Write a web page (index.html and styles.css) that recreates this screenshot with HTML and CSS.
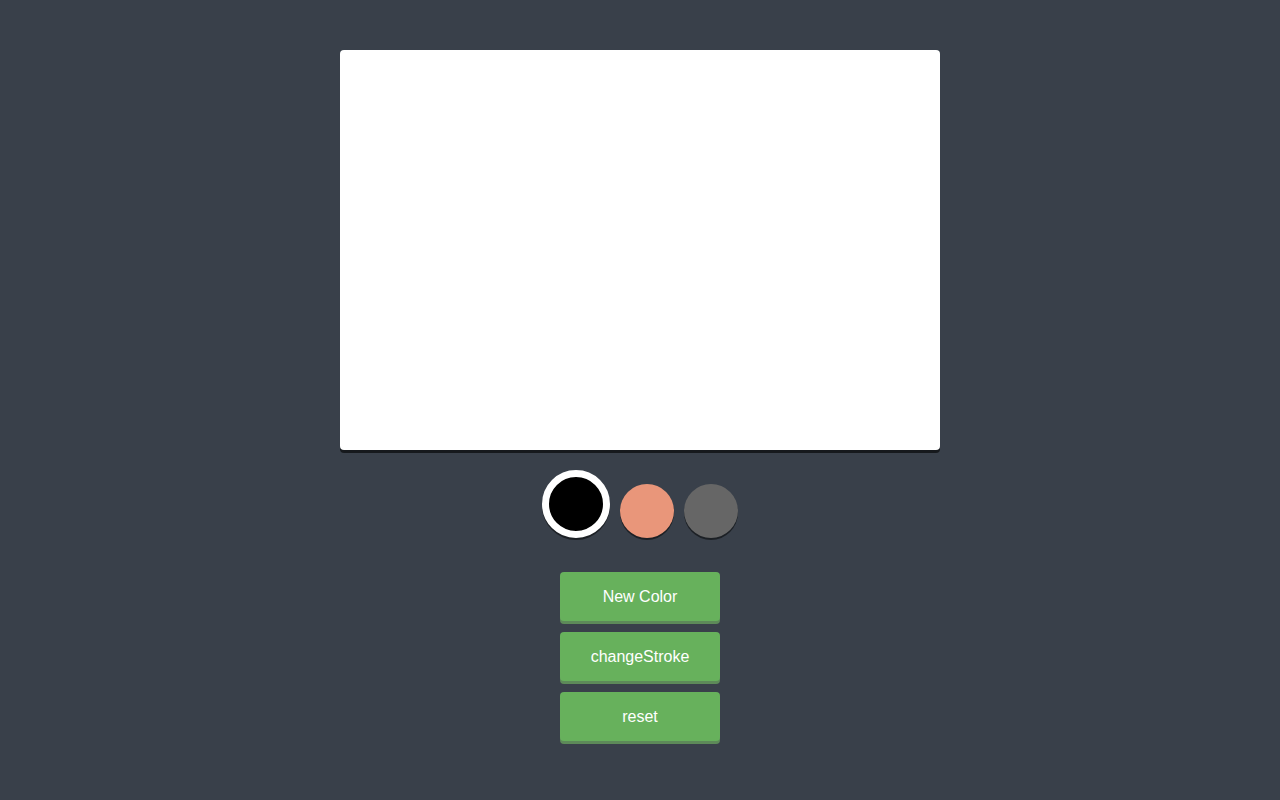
FILE: index.html
```html
<!DOCTYPE html>
<html>
<head>
<meta charset="utf-8">
<link rel="stylesheet" href="styles.css">
</head>
<body>
<main class="app">
  <div class="canvas"></div>
  <div class="colors">
    <div class="swatch black selected"></div>
    <div class="swatch salmon"></div>
    <div class="swatch gray"></div>
  </div>
  <div class="buttons">
    <button class="btn">New Color</button>
    <button class="btn">changeStroke</button>
    <button class="btn">reset</button>
  </div>
</main>
</body>
</html>
```
FILE: styles.css
```css
html, body {
  margin: 0;
  padding: 0;
  background: #39404a;
  font-family: "Liberation Sans", Arial, sans-serif;
}
.app {
  display: flex;
  flex-direction: column;
  align-items: center;
  padding: 50px 0 40px;
}
.canvas {
  width: 600px;
  height: 400px;
  background: #fff;
  border-radius: 4px;
  box-shadow: 0 3px 0 rgba(0, 0, 0, 0.6);
}
.colors {
  display: flex;
  align-items: flex-end;
  gap: 10px;
  margin-top: 20px;
}
.swatch {
  width: 54px;
  height: 54px;
  border-radius: 50%;
  box-shadow: 0 2px 0 rgba(0, 0, 0, 0.5);
}
.swatch.selected {
  border: 7px solid #fff;
}
.black { background: #000; }
.salmon { background: #e9967a; }
.gray { background: #666; }
.buttons {
  display: flex;
  flex-direction: column;
  gap: 11px;
  margin-top: 34px;
}
.btn {
  width: 160px;
  height: 49px;
  border: none;
  border-radius: 4px;
  background: #67b15c;
  color: #fff;
  font-family: "Liberation Sans", Arial, sans-serif;
  font-size: 16px;
  line-height: 49px;
  box-shadow: 0 3px 0 #5d8a59;
  padding: 0 0 1px;
}
```
